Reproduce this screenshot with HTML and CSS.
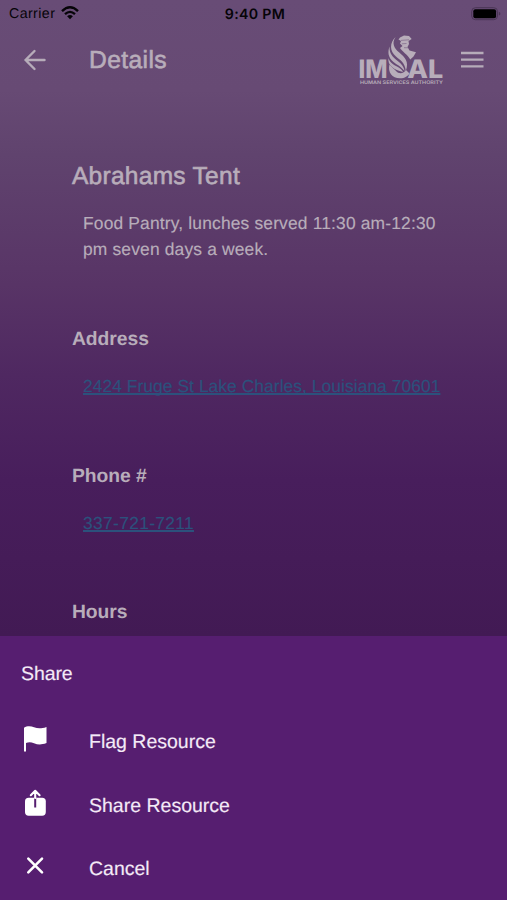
FILE: index.html
```html
<!DOCTYPE html>
<html lang="en">
<head>
<meta charset="utf-8">
<meta name="viewport" content="width=device-width, initial-scale=1">
<title>Details</title>
<link rel="stylesheet" href="styles.css">
</head>
<body>
<div class="screen">
  <div class="page">
    <div class="status">
      <div class="carrier"><span>Carrier</span>
        <svg width="18" height="14" viewBox="0 0 18 14"><path d="M1 5.2Q9-2.5 17 5.2" fill="none" stroke="#060408" stroke-width="2.4"/><path d="M4 8.2Q9 3.5 14 8.2" fill="none" stroke="#060408" stroke-width="2.3"/><path d="M6.1 10.3Q9 7.8 11.9 10.3L9 13.3Z" fill="#060408"/></svg>
      </div>
      <div class="clock">9:40 PM</div>
      <svg class="battery" width="30" height="14" viewBox="0 0 30 14"><rect x=".7" y=".7" width="25.8" height="12" rx="3.7" fill="none" stroke="#4b3656" stroke-width="1"/><rect x="2.3" y="2.2" width="22.8" height="9" rx="2" fill="#000"/><path d="M27.8 4.8Q29.4 5.3 29.4 6.7T27.8 8.6Z" fill="#4b3656"/></svg>
    </div>
    <header class="bar">
      <svg class="back" width="24" height="22" viewBox="0 0 24 22"><path d="M11.5 2L2.5 11l9 9M2.5 11H21.5" fill="none" stroke="#b6acb9" stroke-width="2.4" stroke-linecap="round" stroke-linejoin="round"/></svg>
      <h1>Details</h1>
      <svg class="logo" width="86" height="52" viewBox="358 34 86 52" fill="#b8adba">
        <text class="brand" x="358.6" y="77.8" textLength="29" lengthAdjust="spacingAndGlyphs">IM</text>
        <text class="brand" x="407.3" y="77.8" textLength="36" lengthAdjust="spacingAndGlyphs">AL</text>
        <path d="M389.5 64.5C387.5 72 392 78.3 400 78.3C405 78.3 408 76 409.5 73.5L406 70C404 73.5 399 74.5 396 71C394.3 69 391.5 67 389.5 64.5Z"/>
        <path d="M395.6 37C391.5 43 394 48 399 52.3C405 57.5 409.3 61.5 405.8 71C405 62.5 400.5 60.5 396 56.5C389.5 51 389.5 43 395.6 37Z"/>
        <path d="M389.6 46.5C389 53.5 393 57.5 398 61.3C401.5 64 403.8 66.5 404.6 71C400 65.5 397 65 393.5 62C388 57.5 387.5 52 389.6 46.5Z"/>
        <path d="M388.5 58C389.5 62 393 64.5 397 66.5C400 68 402 69.5 403 72C398 70.5 395 69.5 392 67C389 64.5 388 61.5 388.5 58Z"/>
        <path d="M400 37.5L404 35.6L409 36L411.7 39L408.5 41L409 44L407.5 47L409.5 50.5L416 52.2L413.5 56.5L410.3 59.5C407.5 54.5 402 51.5 400 48L402.5 46L400 43.5L401 41L398.5 39.5Z"/>
        <path d="M401 40.4L409 39.8M401.8 43.8L406.5 43.5M404 47.7L408 47.8" fill="none" stroke="#674b74" stroke-width=".5"/>
        <text class="tagline" x="360" y="84.2" textLength="83" lengthAdjust="spacingAndGlyphs">HUMAN SERVICES AUTHORITY</text>
      </svg>
      <svg class="menu" width="24" height="18" viewBox="0 0 24 18"><path d="M1 2H23.5M1 8.7H23.5M1 15.4H23.5" stroke="#b6acb9" stroke-width="2.3"/></svg>
    </header>
    <main>
      <section class="intro"><h2>Abrahams Tent</h2><p>Food Pantry, lunches served 11:30 am-12:30<br>pm seven days a week.</p></section>
      <section><h3>Address</h3><p><a class="address">2424 Fruge St Lake Charles, Louisiana 70601</a></p></section>
      <section><h3>Phone #</h3><p><a class="phone">337-721-7211</a></p></section>
      <section><h3>Hours</h3></section>
    </main>
  </div>
  <div class="sheet">
    <div class="sheet-title">Share</div>
    <div class="action"><svg width="28" height="30" viewBox="0 0 28 30"><path d="M3 3.7C6 1.7 10 2 13 3.2C17 4.7 20 4.8 25.5 2.9V19C20 21 17 20.7 13 19.2C10 18 7.5 18 5 19V27.5H3Z" fill="#fff"/></svg><span>Flag Resource</span></div>
    <div class="action"><svg width="28" height="30" viewBox="0 0 28 30"><rect x="4" y="9.7" width="20.8" height="18" rx="3.7" fill="#fff"/><path d="M14.2 10V19.5" stroke="#561e70" stroke-width="2"/><path d="M14.2 10V3M9.8 7.2L14.2 2.8L18.6 7.2" fill="none" stroke="#fff" stroke-width="2.1" stroke-linecap="round" stroke-linejoin="round"/></svg><span>Share Resource</span></div>
    <div class="action"><svg width="28" height="30" viewBox="0 0 28 30"><path d="M7.3 7.6L21 21.3M21 7.6L7.3 21.3" stroke="#fff" stroke-width="2.6" stroke-linecap="round"/></svg><span>Cancel</span></div>
  </div>
</div>
</body>
</html>
```
FILE: styles.css
```css
* { box-sizing: border-box; }
body { margin: 0; font-family: "Liberation Sans", Arial, sans-serif; text-rendering: geometricPrecision; }
h1, h2, h3, p { margin: 0; }
svg { display: block; flex: none; }
.screen { height: 900px; display: flex; flex-direction: column; overflow: hidden; }
.page {
  height: 636px; flex: none; overflow: hidden; color: #b8adba;
  background: linear-gradient(#684c76 0, #674a74 90px, #60436e 155px, #583466 285px, #4f2861 375px, #481e5c 480px, #421a54 636px);
}
.status { height: 28px; display: grid; grid-template-columns: 1fr auto 1fr; align-items: center; padding: 0 6px 0 9px; color: #060408; font-size: 14.2px; }
.carrier { display: flex; align-items: center; gap: 6px; letter-spacing: .42px; }
.carrier svg { margin-top: -2px; }
.clock { font-family: Inter, sans-serif; font-weight: 600; letter-spacing: .3px; }
.battery { justify-self: end; }
.bar { height: 64px; display: flex; align-items: center; padding: 0 22px 0 23px; }
h1 { margin-left: 42px; width: 268px; padding-top: 2px; font-size: 24.6px; font-weight: 400; letter-spacing: .4px; -webkit-text-stroke: .6px; }
.logo { margin-left: 1px; }
.menu { margin-left: 16px; }
.brand { font: 800 25.4px Inter, sans-serif; }
.tagline { font: 600 4.8px Inter, sans-serif; }
main { padding: 69px 0 0 72px; }
section { height: 136.7px; }
.intro { height: 163px; }
h2 { padding-top: 1px; font-size: 24.5px; line-height: 30px; font-weight: 400; letter-spacing: .28px; -webkit-text-stroke: .6px; }
h3 { padding-top: 4px; font-size: 19.3px; line-height: 24px; font-weight: 700; letter-spacing: -.05px; }
p { padding-left: 11px; font-size: 17.4px; line-height: 26px; letter-spacing: .17px; white-space: nowrap; -webkit-text-stroke: .15px; }
.intro p { padding-top: 18px; }
section:not(.intro) p { padding-top: 21px; }
a { color: #2c517c; text-decoration: underline; text-decoration-thickness: 1.5px; text-underline-offset: 1px; text-decoration-skip-ink: none; }
.address { letter-spacing: .06px; }
.phone { letter-spacing: .33px; }
.sheet { flex: 1; padding-top: 22px; background: #561e70; color: #f4eaf7; font-size: 19.5px; -webkit-text-stroke: .15px; }
.sheet-title { height: 48px; padding-left: 21px; line-height: 33px; letter-spacing: -.1px; }
.action { height: 63.5px; display: flex; align-items: center; padding-left: 21px; letter-spacing: 0; }
.action svg { margin-top: 3px; }
.action span { margin-left: 40px; padding-top: 10px; }
```
